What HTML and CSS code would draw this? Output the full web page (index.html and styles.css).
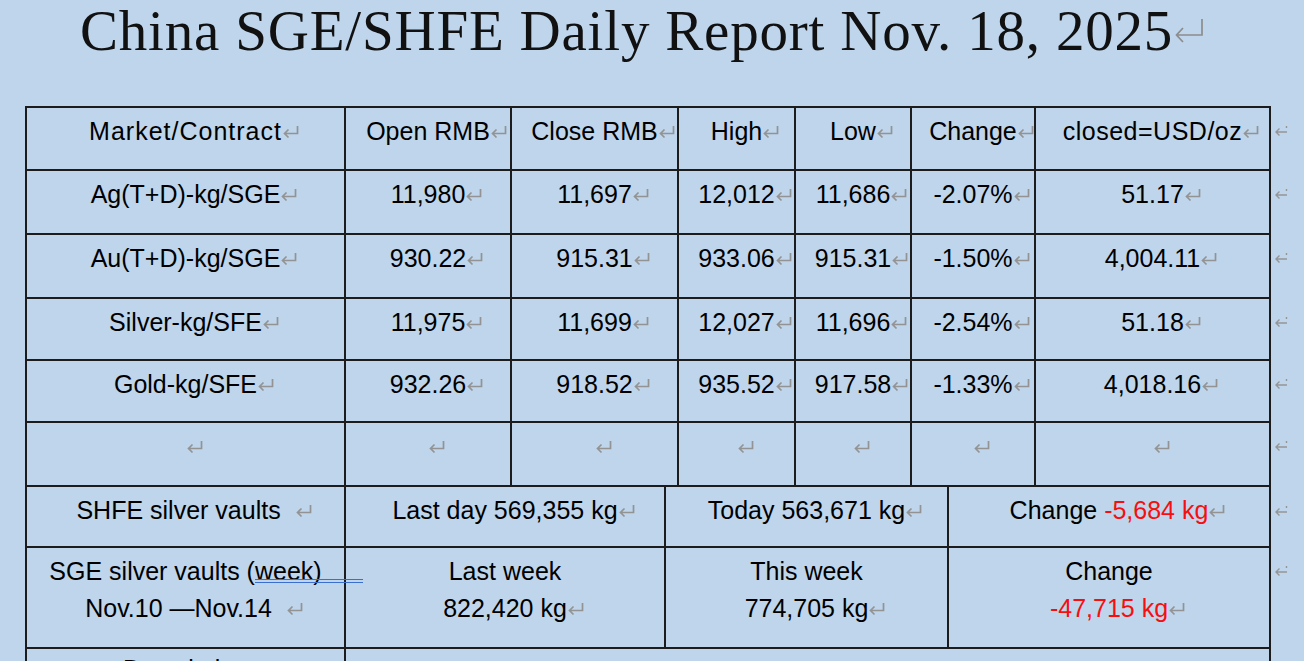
FILE: index.html
```html
<!DOCTYPE html>
<html>
<head>
<meta charset="utf-8">
<link rel="stylesheet" href="styles.css">
</head>
<body>
<h1 class="title">China SGE/SHFE Daily Report Nov. 18, 2025<svg class="pm-title" width="30" height="26" viewBox="0 0 30 26"><path d="M27 1 V17 H1.5 M8 10 L1.5 17 L8 24" fill="none" stroke="#8c8c8c" stroke-width="1.7"/></svg></h1>

<table class="grid top">
  <colgroup>
    <col class="c1"><col class="c2"><col class="c3"><col class="c4"><col class="c5"><col class="c6"><col class="c7"><col class="ce">
  </colgroup>
  <tr class="h63">
    <td><span class="t wide">Market/Contract<i class="pm"></i></span></td>
    <td><span class="t">Open RMB<i class="pm"></i></span></td>
    <td><span class="t">Close RMB<i class="pm"></i></span></td>
    <td><span class="t">High<i class="pm"></i></span></td>
    <td><span class="t">Low<i class="pm"></i></span></td>
    <td><span class="t">Change<i class="pm"></i></span></td>
    <td><span class="t semi">closed=USD/oz<i class="pm"></i></span></td>
    <td class="eor"><i class="er"></i></td>
  </tr>
  <tr class="h64">
    <td><span class="t">Ag(T+D)-kg/SGE<i class="pm"></i></span></td>
    <td><span class="t">11,980<i class="pm"></i></span></td>
    <td><span class="t">11,697<i class="pm"></i></span></td>
    <td><span class="t">12,012<i class="pm"></i></span></td>
    <td><span class="t">11,686<i class="pm"></i></span></td>
    <td><span class="t">-2.07%<i class="pm"></i></span></td>
    <td><span class="t">51.17<i class="pm"></i></span></td>
    <td class="eor"><i class="er"></i></td>
  </tr>
  <tr class="h64">
    <td><span class="t">Au(T+D)-kg/SGE<i class="pm"></i></span></td>
    <td><span class="t">930.22<i class="pm"></i></span></td>
    <td><span class="t">915.31<i class="pm"></i></span></td>
    <td><span class="t">933.06<i class="pm"></i></span></td>
    <td><span class="t">915.31<i class="pm"></i></span></td>
    <td><span class="t">-1.50%<i class="pm"></i></span></td>
    <td><span class="t">4,004.11<i class="pm"></i></span></td>
    <td class="eor"><i class="er"></i></td>
  </tr>
  <tr class="h62">
    <td><span class="t">Silver-kg/SFE<i class="pm"></i></span></td>
    <td><span class="t">11,975<i class="pm"></i></span></td>
    <td><span class="t">11,699<i class="pm"></i></span></td>
    <td><span class="t">12,027<i class="pm"></i></span></td>
    <td><span class="t">11,696<i class="pm"></i></span></td>
    <td><span class="t">-2.54%<i class="pm"></i></span></td>
    <td><span class="t">51.18<i class="pm"></i></span></td>
    <td class="eor"><i class="er"></i></td>
  </tr>
  <tr class="h62">
    <td><span class="t">Gold-kg/SFE<i class="pm"></i></span></td>
    <td><span class="t">932.26<i class="pm"></i></span></td>
    <td><span class="t">918.52<i class="pm"></i></span></td>
    <td><span class="t">935.52<i class="pm"></i></span></td>
    <td><span class="t">917.58<i class="pm"></i></span></td>
    <td><span class="t">-1.33%<i class="pm"></i></span></td>
    <td><span class="t">4,018.16<i class="pm"></i></span></td>
    <td class="eor"><i class="er"></i></td>
  </tr>
  <tr class="h64">
    <td><span class="t"><i class="pm"></i></span></td>
    <td><span class="t"><i class="pm"></i></span></td>
    <td><span class="t"><i class="pm"></i></span></td>
    <td><span class="t"><i class="pm"></i></span></td>
    <td><span class="t"><i class="pm"></i></span></td>
    <td><span class="t"><i class="pm"></i></span></td>
    <td><span class="t"><i class="pm"></i></span></td>
    <td class="eor"><i class="er"></i></td>
  </tr>
</table>

<table class="grid bottom">
  <colgroup>
    <col class="b1"><col class="b2"><col class="b3"><col class="b4"><col class="ce">
  </colgroup>
  <tr class="h61">
    <td><span class="t">SHFE silver vaults&nbsp;&nbsp;<i class="pm"></i></span></td>
    <td><span class="t">Last day 569,355 kg<i class="pm"></i></span></td>
    <td><span class="t">Today 563,671 kg<i class="pm"></i></span></td>
    <td><span class="t">Change <b class="neg">-5,684 kg</b><i class="pm"></i></span></td>
    <td class="eor"><i class="er"></i></td>
  </tr>
  <tr class="h101">
    <td><span class="t">SGE silver vaults (<span class="gram">week)</span></span><br><span class="t">Nov.10 —Nov.14&nbsp;&nbsp;<i class="pm"></i></span></td>
    <td><span class="t">Last week</span><br><span class="t">822,420 kg<i class="pm"></i></span></td>
    <td><span class="t">This week</span><br><span class="t">774,705 kg<i class="pm"></i></span></td>
    <td><span class="t">Change</span><br><span class="t"><b class="neg">-47,715 kg</b><i class="pm"></i></span></td>
    <td class="eor"><i class="er"></i></td>
  </tr>
  <tr class="h40 desc">
    <td><span class="t">Description<i class="pm"></i></span></td>
    <td colspan="3" class="left"><i class="pm"></i></td>
    <td class="eor"><i class="er"></i></td>
  </tr>
</table>
</body>
</html>
```

FILE: styles.css
```css
html, body {
  margin: 0;
  padding: 0;
  background: #bed5ec;
  overflow: hidden;
}
body {
  width: 1304px;
  height: 661px;
  color: #000;
}
.title {
  margin: 0;
  padding-left: 80px;
  font-family: "Liberation Serif", "Times New Roman", serif;
  font-weight: normal;
  font-size: 57px;
  line-height: 62px;
  letter-spacing: 0.8px;
  height: 106px;
  white-space: nowrap;
  color: #111;
}
.pm-title {
  display: inline-block;
  vertical-align: 6px;
  margin-left: 2px;
}
.grid {
  border-collapse: collapse;
  table-layout: fixed;
  margin-left: 25px;
  font-family: "Liberation Sans", Arial, sans-serif;
  font-size: 25px;
  line-height: 37px;
}
.grid td {
  border: 2px solid #1c1c1c;
  vertical-align: top;
  text-align: center;
  padding: 5px 0 0 0;
  white-space: nowrap;
}
.grid td.eor {
  border: none;
  text-align: left;
  padding-left: 3px;
}
.grid td.left {
  text-align: left;
  padding-left: 12px;
}
.bottom tr:first-child td {
  border-top: none;
}
.c1 { width: 319px; }
.c2 { width: 166px; }
.c3 { width: 167px; }
.c4 { width: 117px; }
.c5 { width: 116px; }
.c6 { width: 124px; }
.c7 { width: 235px; }
.ce { width: 30px; }
.b1 { width: 319px; }
.b2 { width: 320px; }
.b3 { width: 283px; }
.b4 { width: 322px; }

.h63 { height: 63px; }
.h64 { height: 64px; }
.h62 { height: 62px; }
.h61 { height: 60px; }
.h101 { height: 101px; }
.h40 { height: 40px; }
.grid .desc td { padding-top: 2px; }

.t {
  display: inline-block;
  white-space: nowrap;
}
.wide { letter-spacing: 1px; }
.semi { letter-spacing: 0.5px; }
.neg {
  color: #f50f0f;
  font-weight: normal;
}
.pm {
  display: inline-block;
  width: 18px;
  height: 14px;
  margin-right: -18px;
  vertical-align: 1px;
  background: no-repeat center / 18px 14px url("data:image/svg+xml;utf8,<svg xmlns='http://www.w3.org/2000/svg' width='18' height='14' viewBox='0 0 18 14'><path d='M15.5 1 V8.5 H2.5 M6.5 4.5 L2.5 8.5 L6.5 12.5' fill='none' stroke='%23939393' stroke-width='1.7'/></svg>");
}
.er {
  display: inline-block;
  width: 14px;
  height: 12px;
  vertical-align: 2px;
  background: no-repeat center / 14px 12px url("data:image/svg+xml;utf8,<svg xmlns='http://www.w3.org/2000/svg' width='14' height='12' viewBox='0 0 14 12'><path d='M13 7 H2 M5.5 3.5 L2 7 L5.5 10.5 M12.5 1 V3' fill='none' stroke='%23959595' stroke-width='1.4'/></svg>");
}
.gram {
  position: relative;
}
.gram::after {
  content: "";
  position: absolute;
  left: 0;
  top: 22px;
  width: 108px;
  height: 2px;
  border-top: 1px solid #3a6fd0;
  border-bottom: 1px solid #3a6fd0;
}
```
